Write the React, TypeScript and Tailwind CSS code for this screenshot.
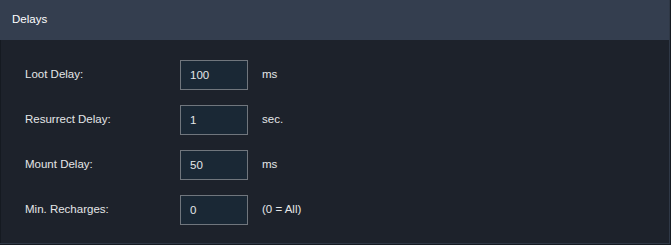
const rows = [
  { label: 'Loot Delay:', value: '100', unit: 'ms' },
  { label: 'Resurrect Delay:', value: '1', unit: 'sec.' },
  { label: 'Mount Delay:', value: '50', unit: 'ms' },
  { label: 'Min. Recharges:', value: '0', unit: '(0 = All)' },
]

export default function App() {
  return (
    <div className="w-[671px] h-[245px] bg-[#151a21] font-['Liberation_Sans',sans-serif] text-[11.5px]">
      <div className="w-[670px] h-[244px] flex flex-col border-r border-b border-[#2f3846]">
        <div className="h-10 bg-[#343e4f] flex items-center px-3 text-white">Delays</div>
        <div className="flex-1 bg-[#1d222b] border-l border-[#151a21] pl-6 pt-5 flex flex-col gap-[15px]">
          {rows.map(r => (
            <div key={r.label} className="flex items-center h-[30px]">
              <span className="w-[155px] text-[#e4e6e8]">{r.label}</span>
              <input
                readOnly
                value={r.value}
                className="w-[68px] h-[30px] bg-[#1a2835] border border-[#70767d] px-[9px] text-[#e4e6e8] outline-none"
              />
              <span className="ml-[14px] text-[#e4e6e8]">{r.unit}</span>
            </div>
          ))}
        </div>
      </div>
    </div>
  )
}
